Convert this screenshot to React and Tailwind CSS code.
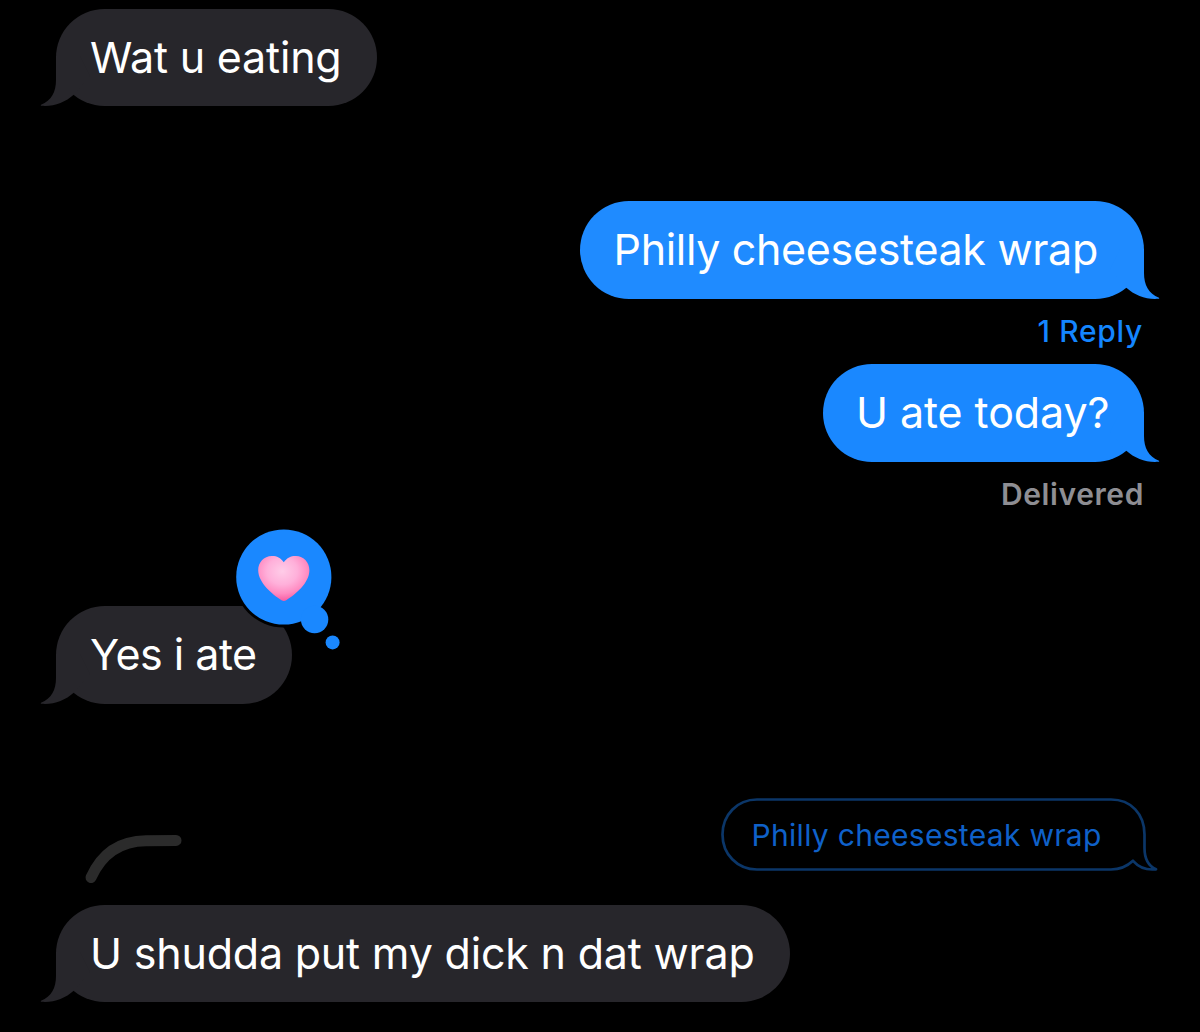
import React from 'react';

// Small hook on the lower corner of a bubble, mirrored for sent messages
function Tail({ sent }) {
    return (
        <svg
            className={sent ? 'absolute bottom-0 -right-4 -scale-x-100' : 'absolute bottom-0 -left-4'}
            width="64"
            height="50"
            viewBox="0 0 64 50"
            fill="currentColor"
        >
            <path d="M16 0 V24 C16 36 11.5 44.5 1 48.8 C0.4 49.3 1 49.8 2 49.8 C14 50.6 25 46.5 34 38.5 L50 20 L40 0 Z" />
        </svg>
    );
}

function Bubble({ children, sent, className }) {
    return (
        <div className={`relative flex h-[97.5px] items-center rounded-full text-[43px] leading-none ${className}`}>
            <Tail sent={sent} />
            <span className="relative whitespace-nowrap text-white">{children}</span>
        </div>
    );
}

function HeartTapback() {
    return (
        <svg className="absolute -top-[80px] left-[176px]" width="112" height="126" viewBox="232 526 112 126">
            <defs>
                <radialGradient id="heart" cx="0.47" cy="0.34" r="0.66">
                    <stop offset="0" stopColor="#ffcce8" />
                    <stop offset="0.45" stopColor="#ffb0da" />
                    <stop offset="0.75" stopColor="#ff8cc2" />
                    <stop offset="1" stopColor="#f85ca2" />
                </radialGradient>
            </defs>
            <circle cx="283.8" cy="577" r="50.5" fill="#000" />
            <g fill="#1a88ff">
                <circle cx="283.8" cy="577" r="47.6" />
                <circle cx="314.6" cy="619.5" r="13.7" />
                <circle cx="332.6" cy="642.4" r="7" />
            </g>
            <path
                d="M283.8 562.3 C280.5 557.5 276.3 555.8 271.8 556 C263.8 556.3 258 562.3 258.2 570.5 C258.5 583 272.5 594.5 281.5 600.2 C283.2 601.2 284.6 601.2 286.2 600.2 C295.5 594.5 309.2 583 309.4 570.5 C309.5 562.3 303.8 556.3 296 556 C291.5 555.8 287 557.5 283.8 562.3 Z"
                fill="url(#heart)"
            />
        </svg>
    );
}

function ReplyPreview({ children }) {
    return (
        <div className="relative flex h-[73px] w-[437px] items-center pt-px pl-[30.5px] text-[30px] leading-none">
            <svg className="absolute inset-0" width="437" height="73" viewBox="0 0 437 73" fill="none">
                <path
                    d="M36 1.5 H390 C410 1.5 423.5 16 423.5 36.5 V50 C423.5 60 427.5 68 435 71.3 C426 72.3 418 69.5 412 62.8 C406 68.5 398 71.5 390 71.5 H36 C16 71.5 1.5 56 1.5 36.5 C1.5 17 16 1.5 36 1.5 Z"
                    stroke="#0b3668"
                    strokeWidth="2.7"
                    strokeLinejoin="round"
                />
            </svg>
            <span className="relative whitespace-nowrap tracking-[0.3px] text-[#0f61c9]">{children}</span>
        </div>
    );
}

export default function App() {
    return (
        <div className="flex h-[1032px] w-[1200px] flex-col overflow-hidden bg-black pt-[8.5px] pr-[56px] pl-[56px] font-['Inter',sans-serif]">
            <Bubble className="w-[320.5px] self-start bg-[#27262b] pl-[34px] tracking-[-0.2px] text-[#27262b]">
                <span>Wat u eating</span>
            </Bubble>

            <Bubble sent className="mt-[95px] w-[564.5px] self-end bg-[#1f8bff] pl-[34px] tracking-[-0.33px] text-[#1f8bff]">
                <span>Philly cheesesteak wrap</span>
            </Bubble>
            <div className="flex h-[65.5px] items-center justify-end pr-px pb-px text-[30px] leading-none font-medium tracking-[0.7px] text-[#1486ff]">
                <span>1 Reply</span>
            </div>

            <Bubble sent className="w-[321.5px] self-end bg-[#1a88ff] pl-[33.5px] tracking-[-0.08px] text-[#1a88ff]">
                <span>U ate today?</span>
            </Bubble>
            <div className="flex h-[65.5px] items-center justify-end pb-px text-[30px] leading-none font-semibold tracking-[0.6px] text-[#8e8e93]">
                <span>Delivered</span>
            </div>

            <div className="relative mt-[79px] self-start">
                <Bubble className="w-[236px] bg-[#27262b] pl-[34px] tracking-[-0.5px] text-[#27262b]">
                    <span>Yes i ate</span>
                </Bubble>
                <HeartTapback />
            </div>

            {/* Quoted message with the thread line leading to the reply */}
            <div className="mt-[94.5px] -mr-[14px] flex items-start justify-between">
                <svg className="mt-[30px] ml-[26px]" width="104" height="60" viewBox="82 828 104 60" fill="none">
                    <path d="M91 877.5 C102 853 120 841 146 840.7 L176 840.5" stroke="#2b2b2b" strokeWidth="11" strokeLinecap="round" />
                </svg>
                <ReplyPreview>Philly cheesesteak wrap</ReplyPreview>
            </div>

            <Bubble className="mt-[16.5px] w-[734px] self-start bg-[#27262b] pl-[34px] tracking-[-0.2px] text-[#27262b]">
                <span>U shudda put my dick n dat wrap</span>
            </Bubble>
        </div>
    );
}
